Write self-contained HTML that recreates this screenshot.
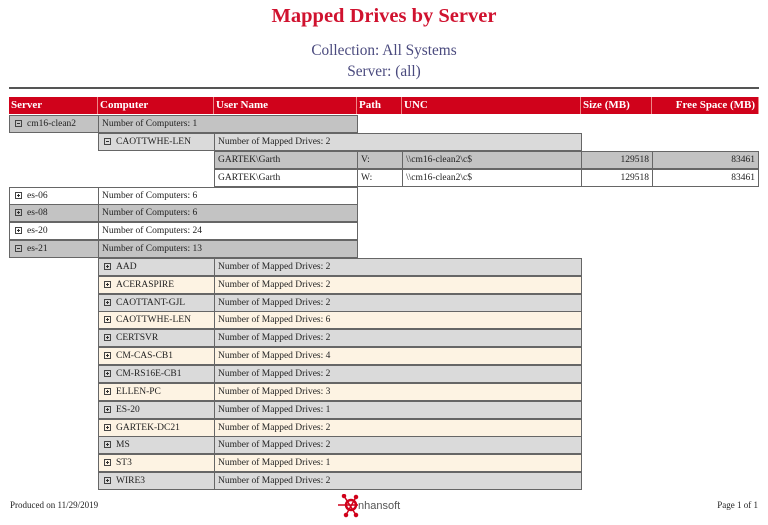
<!DOCTYPE html>
<html><head><meta charset="utf-8"><style>
body{margin:0;width:768px;height:525px;background:#fff;position:relative;overflow:hidden;font-family:"Liberation Serif",serif;}
.c{position:absolute;box-sizing:border-box;border:1px solid #666;height:18px;font-size:9.5px;line-height:16px;padding-left:3px;white-space:nowrap;color:#222;}
.h{position:absolute;top:97px;height:17px;background:#d0021b;color:#fff;font-weight:bold;font-size:11px;line-height:17px;padding-left:2px;box-sizing:border-box;border-right:1px solid #e88;}
.g{background:#c3c3c3}.l{background:#dadada}.y{background:#fdf3e3}.w{background:#fff}
.b{display:inline-block;width:7px;height:7px;border:1px solid #444;box-sizing:border-box;position:relative;margin:0 5px 0 2px;vertical-align:-1px;}
.b:before{content:"";position:absolute;left:1px;right:1px;top:2px;height:1px;background:#333}
.p:after{content:"";position:absolute;top:1px;bottom:1px;left:2px;width:1px;background:#333}
.r{text-align:right;padding-right:3px}
</style></head><body>
<div style="position:absolute;top:5px;width:768px;text-align:center;color:#d0122f;font-weight:bold;font-size:20.5px">Mapped Drives by Server</div>
<div style="position:absolute;top:42px;width:768px;text-align:center;color:#4a4a7e;font-size:15.3px">Collection: All Systems</div>
<div style="position:absolute;top:63px;width:768px;text-align:center;color:#4a4a7e;font-size:15.3px">Server: (all)</div>
<div style="position:absolute;top:87px;left:9px;width:750px;height:2px;background:#555"></div>

<div class="h" style="left:9px;width:89px">Server</div>
<div class="h" style="left:98px;width:116px">Computer</div>
<div class="h" style="left:214px;width:143px">User Name</div>
<div class="h" style="left:357px;width:45px">Path</div>
<div class="h" style="left:402px;width:179px">UNC</div>
<div class="h" style="left:581px;width:71px">Size (MB)</div>
<div class="h" style="left:652px;width:107px;text-align:right;padding-right:3px">Free Space (MB)</div>

<div class="c g" style="top:115px;left:9px;width:90px"><span class="b"></span>cm16-clean2</div>
<div class="c g" style="top:115px;left:98px;width:260px">Number of Computers: 1</div>
<div class="c l" style="top:133px;left:98px;width:117px"><span class="b"></span>CAOTTWHE-LEN</div>
<div class="c l" style="top:133px;left:214px;width:368px">Number of Mapped Drives: 2</div>
<div class="c g" style="top:151px;left:214px;width:144px">GARTEK\Garth</div>
<div class="c g" style="top:151px;left:357px;width:46px">V:</div>
<div class="c g" style="top:151px;left:402px;width:180px">\\cm16-clean2\c$</div>
<div class="c g r" style="top:151px;left:581px;width:72px">129518</div>
<div class="c g r" style="top:151px;left:652px;width:107px">83461</div>
<div class="c w" style="top:169px;left:214px;width:144px">GARTEK\Garth</div>
<div class="c w" style="top:169px;left:357px;width:46px">W:</div>
<div class="c w" style="top:169px;left:402px;width:180px">\\cm16-clean2\c$</div>
<div class="c w r" style="top:169px;left:581px;width:72px">129518</div>
<div class="c w r" style="top:169px;left:652px;width:107px">83461</div>

<div class="c w" style="top:186.5px;left:9px;width:90px"><span class="b p"></span>es-06</div>
<div class="c w" style="top:186.5px;left:98px;width:260px">Number of Computers: 6</div>
<div class="c g" style="top:204.3px;left:9px;width:90px"><span class="b p"></span>es-08</div>
<div class="c g" style="top:204.3px;left:98px;width:260px">Number of Computers: 6</div>
<div class="c w" style="top:222.1px;left:9px;width:90px"><span class="b p"></span>es-20</div>
<div class="c w" style="top:222.1px;left:98px;width:260px">Number of Computers: 24</div>
<div class="c g" style="top:240px;left:9px;width:90px"><span class="b"></span>es-21</div>
<div class="c g" style="top:240px;left:98px;width:260px">Number of Computers: 13</div>

<div class="c l" style="top:257.8px;left:98px;width:117px"><span class="b p"></span>AAD</div><div class="c l" style="top:257.8px;left:214px;width:368px">Number of Mapped Drives: 2</div>
<div class="c y" style="top:275.7px;left:98px;width:117px"><span class="b p"></span>ACERASPIRE</div><div class="c y" style="top:275.7px;left:214px;width:368px">Number of Mapped Drives: 2</div>
<div class="c l" style="top:293.5px;left:98px;width:117px"><span class="b p"></span>CAOTTANT-GJL</div><div class="c l" style="top:293.5px;left:214px;width:368px">Number of Mapped Drives: 2</div>
<div class="c y" style="top:311.4px;left:98px;width:117px"><span class="b p"></span>CAOTTWHE-LEN</div><div class="c y" style="top:311.4px;left:214px;width:368px">Number of Mapped Drives: 6</div>
<div class="c l" style="top:329.2px;left:98px;width:117px"><span class="b p"></span>CERTSVR</div><div class="c l" style="top:329.2px;left:214px;width:368px">Number of Mapped Drives: 2</div>
<div class="c y" style="top:347.1px;left:98px;width:117px"><span class="b p"></span>CM-CAS-CB1</div><div class="c y" style="top:347.1px;left:214px;width:368px">Number of Mapped Drives: 4</div>
<div class="c l" style="top:364.9px;left:98px;width:117px"><span class="b p"></span>CM-RS16E-CB1</div><div class="c l" style="top:364.9px;left:214px;width:368px">Number of Mapped Drives: 2</div>
<div class="c y" style="top:382.8px;left:98px;width:117px"><span class="b p"></span>ELLEN-PC</div><div class="c y" style="top:382.8px;left:214px;width:368px">Number of Mapped Drives: 3</div>
<div class="c l" style="top:400.6px;left:98px;width:117px"><span class="b p"></span>ES-20</div><div class="c l" style="top:400.6px;left:214px;width:368px">Number of Mapped Drives: 1</div>
<div class="c y" style="top:418.5px;left:98px;width:117px"><span class="b p"></span>GARTEK-DC21</div><div class="c y" style="top:418.5px;left:214px;width:368px">Number of Mapped Drives: 2</div>
<div class="c l" style="top:436.3px;left:98px;width:117px"><span class="b p"></span>MS</div><div class="c l" style="top:436.3px;left:214px;width:368px">Number of Mapped Drives: 2</div>
<div class="c y" style="top:454.2px;left:98px;width:117px"><span class="b p"></span>ST3</div><div class="c y" style="top:454.2px;left:214px;width:368px">Number of Mapped Drives: 1</div>
<div class="c l" style="top:472px;left:98px;width:117px"><span class="b p"></span>WIRE3</div><div class="c l" style="top:472px;left:214px;width:368px">Number of Mapped Drives: 2</div>

<div style="position:absolute;top:500px;left:10px;font-size:9px;color:#222">Produced on 11/29/2019</div>
<div style="position:absolute;top:500px;right:10px;font-size:9px;color:#222">Page 1 of 1</div>
<svg style="position:absolute;left:338px;top:494px" width="80" height="24" viewBox="0 0 80 24">
<g stroke="#d0021b" stroke-width="1.5" fill="#d0021b">
<line x1="0" y1="11" x2="20" y2="11"/><line x1="6" y1="2" x2="18" y2="21"/><line x1="18" y1="3" x2="8" y2="21"/>
<circle cx="13" cy="11" r="5" fill="none" stroke-width="2.5"/>
<circle cx="6" cy="2" r="1.5"/><circle cx="18" cy="3" r="1.5"/><circle cx="8" cy="21" r="1.5"/><circle cx="18" cy="21" r="1.5"/>
</g>
<text x="20" y="15" font-family="Liberation Sans,sans-serif" font-size="11" fill="#555">nhansoft</text>
</svg>
</body></html>
